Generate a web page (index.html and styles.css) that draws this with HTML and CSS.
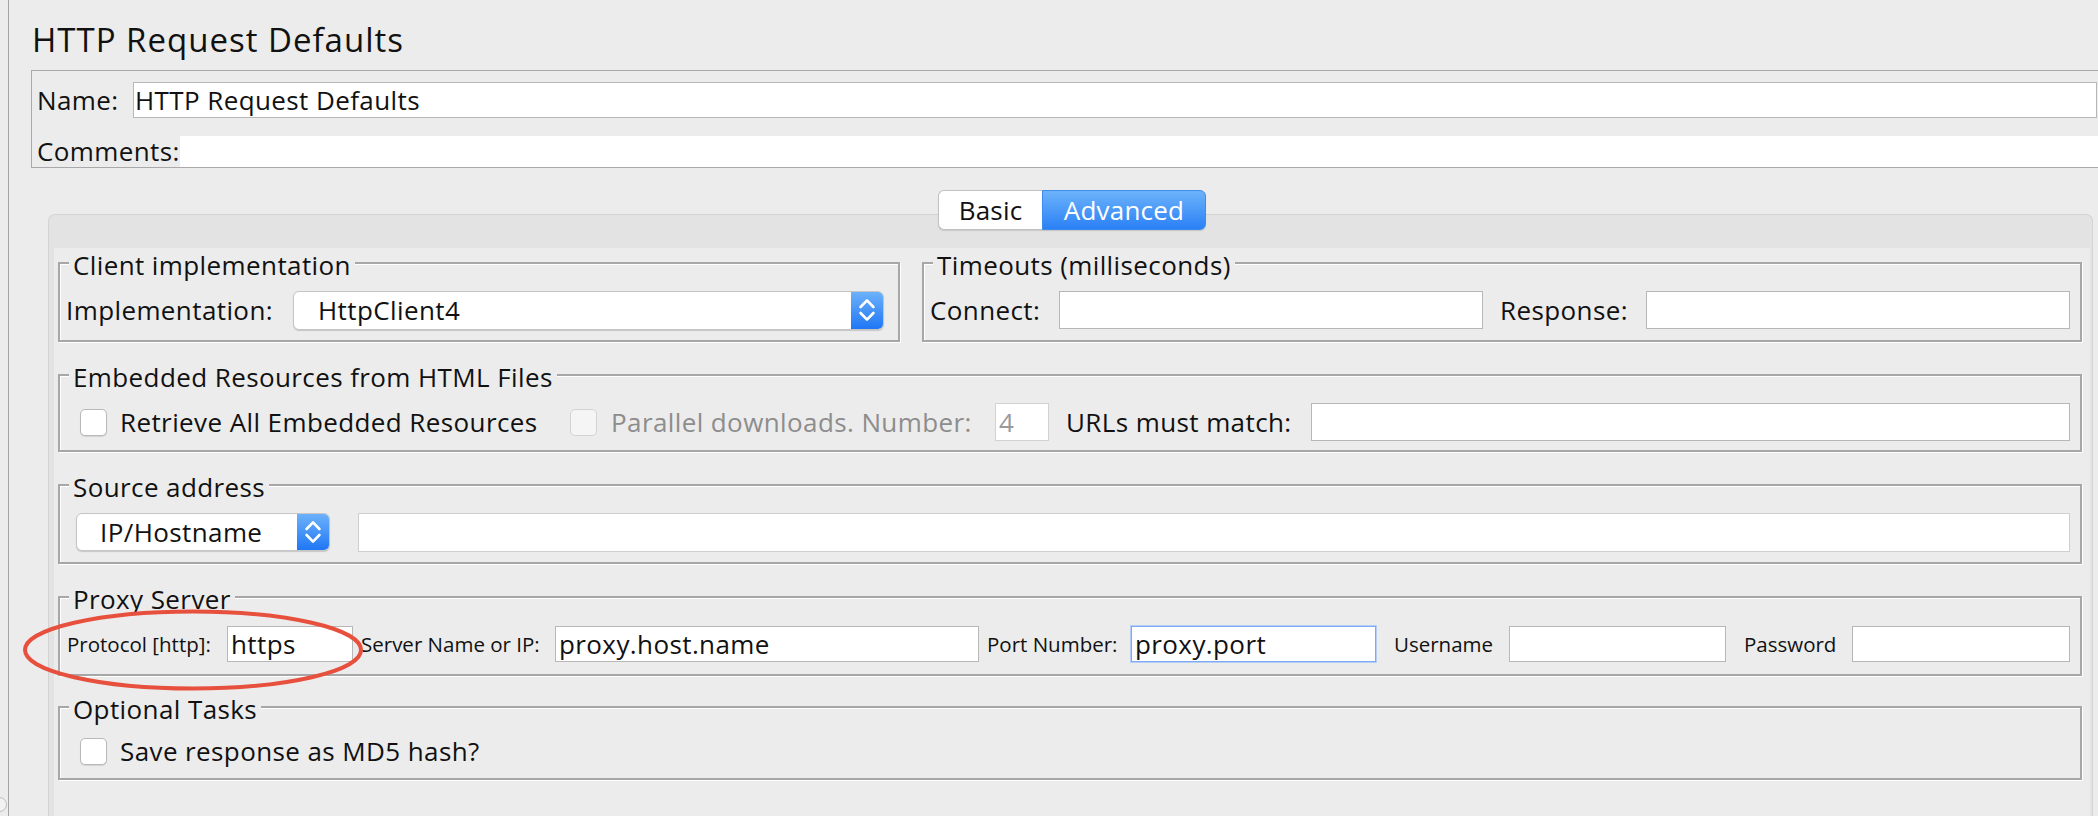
FILE: index.html
```html
<!DOCTYPE html>
<html>
<head>
<meta charset="utf-8">
<title>HTTP Request Defaults</title>
<link rel="stylesheet" href="styles.css">
</head>
<body>
<div class="app">
  <div class="splitter"><span class="knob"></span></div>
  <div class="main">
    <h1 class="title">HTTP Request Defaults</h1>
    <div class="namebox">
      <div class="nrow">
        <span class="nlabel">Name:</span>
        <div class="field name-field">HTTP Request Defaults</div>
      </div>
      <div class="crow">
        <span class="clabel">Comments:</span>
        <div class="comments"></div>
      </div>
    </div>

    <div class="tabwrap">
      <div class="tabs">
        <span class="tab tab-basic">Basic</span>
        <span class="tab tab-adv">Advanced</span>
      </div>
      <div class="panel">
        <div class="inner">
          <div class="row-top">
            <fieldset class="fs fs-client">
              <legend>Client implementation</legend>
              <div class="line">
                <span class="lbl">Implementation:</span>
                <div class="select sel-impl">
                  <span class="sel-text">HttpClient4</span>
                  <span class="stepper">
                    <svg width="16" height="26" viewBox="0 0 16 26"><polyline points="1.6,10 8,3.4 14.4,10" /><polyline points="1.6,16 8,22.6 14.4,16" /></svg>
                  </span>
                </div>
              </div>
            </fieldset>
            <fieldset class="fs fs-timeouts">
              <legend>Timeouts (milliseconds)</legend>
              <div class="line">
                <span class="lbl lbl-connect">Connect:</span>
                <div class="field grow"></div>
                <span class="lbl lbl-response">Response:</span>
                <div class="field grow"></div>
              </div>
            </fieldset>
          </div>

          <fieldset class="fs fs-embedded">
            <legend>Embedded Resources from HTML Files</legend>
            <div class="line line-38">
              <span class="check"></span>
              <span class="lbl lbl-retrieve">Retrieve All Embedded Resources</span>
              <span class="check check-disabled"></span>
              <span class="lbl lbl-parallel">Parallel downloads. Number:</span>
              <div class="field field-num">4</div>
              <span class="lbl lbl-urls">URLs must match:</span>
              <div class="field grow"></div>
            </div>
          </fieldset>

          <fieldset class="fs fs-source">
            <legend>Source address</legend>
            <div class="line">
              <div class="select sel-ip">
                <span class="sel-text">IP/Hostname</span>
                <span class="stepper">
                  <svg width="16" height="26" viewBox="0 0 16 26"><polyline points="1.6,10 8,3.4 14.4,10" /><polyline points="1.6,16 8,22.6 14.4,16" /></svg>
                </span>
              </div>
              <div class="field field-src grow"></div>
            </div>
          </fieldset>

          <fieldset class="fs fs-proxy">
            <legend>Proxy Server</legend>
            <div class="line">
              <span class="slbl slbl-protocol">Protocol [http]:</span>
              <div class="field pfield pf-protocol">https</div>
              <span class="slbl slbl-server">Server Name or IP:</span>
              <div class="field pfield pf-server">proxy.host.name</div>
              <span class="slbl slbl-port">Port Number:</span>
              <div class="field pfield pf-port focused">proxy.port</div>
              <span class="slbl slbl-user">Username</span>
              <div class="field pfield pf-user"></div>
              <span class="slbl slbl-pass">Password</span>
              <div class="field pfield grow"></div>
            </div>
          </fieldset>

          <fieldset class="fs fs-optional">
            <legend>Optional Tasks</legend>
            <div class="line line-34">
              <span class="check"></span>
              <span class="lbl lbl-retrieve">Save response as MD5 hash?</span>
            </div>
          </fieldset>
        </div>
      </div>
    </div>
  </div>

  <svg class="annotation" width="342" height="84" viewBox="0 0 342 84">
    <ellipse cx="171" cy="42" rx="168" ry="38.5" />
  </svg>
</div>
</body>
</html>
```

FILE: styles.css
```css
* { box-sizing: border-box; }

html, body {
  margin: 0;
  padding: 0;
}

body {
  width: 2098px;
  height: 816px;
  overflow: hidden;
  background: #ececec;
  font-family: "Open Sans", "DejaVu Sans", sans-serif;
  font-size: 26px;
  letter-spacing: 0.4px;
  color: #111;
}

.app {
  position: relative;
  display: flex;
  width: 2098px;
  height: 816px;
  overflow: hidden;
}

.splitter {
  position: relative;
  flex: none;
  width: 9px;
  border-right: 1px solid #a3a3a3;
  background: #ececec;
}

.knob {
  position: absolute;
  left: -8px;
  top: 797px;
  width: 15px;
  height: 15px;
  border-radius: 50%;
  background: #f2f2f2;
  border: 1px solid #bdbdbd;
}

.main {
  flex: 1;
  min-width: 0;
  display: flex;
  flex-direction: column;
  padding-left: 22px;
}

.title {
  margin: 20px 0 0;
  padding-left: 1px;
  height: 40px;
  font-size: 33px;
  letter-spacing: 1px;
  line-height: 40px;
  font-weight: normal;
  color: #111;
}

/* Name / comments */
.namebox {
  margin-top: 10px;
  margin-right: -14px;
  height: 98px;
  border: 1px solid #a9a9a9;
  padding: 11px 14px 0 5px;
}

.nrow {
  display: flex;
  align-items: center;
  height: 36px;
}

.nlabel {
  width: 96px;
  flex: none;
  line-height: 36px;
}

.field {
  height: 38px;
  background: #fff;
  border: 1px solid #b7b7b7;
  line-height: 36px;
  padding-left: 3px;
  white-space: nowrap;
  overflow: hidden;
  flex: none;
}

.name-field {
  flex: 1;
  height: 36px;
  line-height: 34px;
  padding-left: 1px;
}

.crow {
  display: flex;
  margin-top: 18px;
  height: 31px;
}

.clabel {
  width: 143px;
  flex: none;
  line-height: 31px;
  white-space: nowrap;
}

.comments {
  flex: 1;
  margin-right: -14px;
  background: #fff;
}

/* Tabs */
.tabwrap {
  flex: 1;
  display: flex;
  flex-direction: column;
  margin: 22px 5px 0 17px;
}

.tabs {
  position: relative;
  z-index: 1;
  display: flex;
  justify-content: center;
  height: 40px;
  margin-bottom: -16px;
  padding-left: 3px;
}

.tab {
  height: 40px;
  line-height: 38px;
  text-align: center;
  font-size: 26px;
  letter-spacing: 0.2px;
}

.tab-basic {
  width: 104px;
  background: #fff;
  border: 1px solid #c2c2c2;
  border-right: none;
  border-radius: 6px 0 0 6px;
  color: #111;
  box-shadow: 0 1px 1px rgba(0, 0, 0, 0.12);
}

.tab-adv {
  width: 164px;
  color: #fff;
  background: linear-gradient(#6db3fb, #2a80f6);
  border: 1px solid #3f8cef;
  border-radius: 0 6px 6px 0;
  box-shadow: 0 1px 1px rgba(0, 0, 0, 0.15);
}

.panel {
  flex: 1;
  background: #e3e3e3;
  border: 1px solid #d3d3d3;
  border-bottom: none;
  border-radius: 7px 7px 0 0;
  padding: 33px 2px 0 5px;
}

.inner {
  height: 100%;
  background: #ececec;
  padding: 0 8px 0 4px;
}

/* Fieldsets */
.fs {
  margin: 18px 0 0;
  min-width: 0;
  border: 2px solid #a7a7a7;
  box-shadow: inset 1px 1px 0 #fff, 1px 1px 0 #fff;
  padding: 12px 10px 10px 6px;
}

.fs legend {
  margin-left: 3px;
  padding: 4px 4px 0;
  line-height: 26px;
  font-size: 26px;
  background: #ececec;
  color: #111;
}

.row-top {
  display: flex;
  gap: 22px;
}

.row-top .fs {
  margin-top: 0;
}

.fs-client {
  flex: none;
  width: 842px;
  padding-right: 14px;
}

.fs-timeouts {
  flex: 1;
}

.fs-embedded {
  padding-top: 13px;
  padding-bottom: 9px;
}

.fs-optional {
  margin-top: 16px;
}

.line {
  display: flex;
  align-items: center;
  height: 40px;
}

.line-38 { height: 38px; }
.line-34 { height: 34px; }

.lbl {
  flex: none;
  white-space: nowrap;
}

.grow { flex: 1; min-width: 0; }

/* select */
.select {
  display: flex;
  height: 39px;
  background: #fff;
  border: 1px solid #c5c5c5;
  border-radius: 6px;
  box-shadow: 0 1px 1px rgba(0, 0, 0, 0.16);
  overflow: hidden;
}

.sel-impl {
  flex: 1;
  margin-left: 20px;
}

.sel-text {
  flex: 1;
  padding-left: 24px;
  line-height: 37px;
  white-space: nowrap;
}

.stepper {
  flex: none;
  width: 32px;
  display: flex;
  align-items: center;
  justify-content: center;
  background: linear-gradient(#6cb1fa, #2077f5);
}

.stepper svg polyline {
  fill: none;
  stroke: #fff;
  stroke-width: 2.6;
  stroke-linecap: round;
  stroke-linejoin: round;
}

.sel-ip {
  flex: none;
  width: 254px;
  height: 38px;
  margin-left: 10px;
}

.sel-ip .sel-text {
  padding-left: 23px;
  line-height: 36px;
}

.field-src {
  margin-left: 28px;
  height: 39px;
  border-color: #cfcfcf;
}

/* timeouts */
.lbl-connect { width: 129px; }
.lbl-response { width: 163px; padding-left: 17px; }

/* embedded */
.check {
  flex: none;
  width: 27px;
  height: 27px;
  margin-left: 14px;
  background: #fff;
  border: 1px solid #b9b9b9;
  border-radius: 5px;
  box-shadow: 0 1px 1px rgba(0, 0, 0, 0.1);
}

.check-disabled {
  margin-left: 0;
  background: #f5f5f5;
  border-color: #d3d3d3;
  box-shadow: none;
}

.lbl-retrieve { width: 463px; padding-left: 13px; }
.lbl-parallel { width: 398px; padding-left: 14px; color: #8d8d8d; }

.field-num {
  width: 54px;
  color: #9a9a9a;
  border-color: #d2d2d2;
}

.lbl-urls { width: 262px; padding-left: 17px; }

/* proxy */
.slbl {
  flex: none;
  font-size: 20.5px;
  letter-spacing: 0;
  white-space: nowrap;
}

.slbl-protocol { width: 161px; padding-left: 1px; }
.slbl-server { width: 202px; padding-left: 8px; }
.slbl-port { width: 152px; padding-left: 8px; }
.slbl-user { width: 133px; padding-left: 18px; }
.slbl-pass { width: 126px; padding-left: 18px; }

.pfield {
  height: 36px;
  line-height: 34px;
}

.pf-protocol { width: 126px; }
.pf-server { width: 424px; }
.pf-port { width: 245px; }
.pf-user { width: 217px; }

.focused {
  border: 1px solid #7eaaf0;
  box-shadow: 0 0 0 1px #b3cff6;
}

/* annotation overlay */
.annotation {
  position: absolute;
  left: 22px;
  top: 608px;
  overflow: visible;
}

.annotation ellipse {
  fill: none;
  stroke: #e8503e;
  stroke-width: 4;
}
```
